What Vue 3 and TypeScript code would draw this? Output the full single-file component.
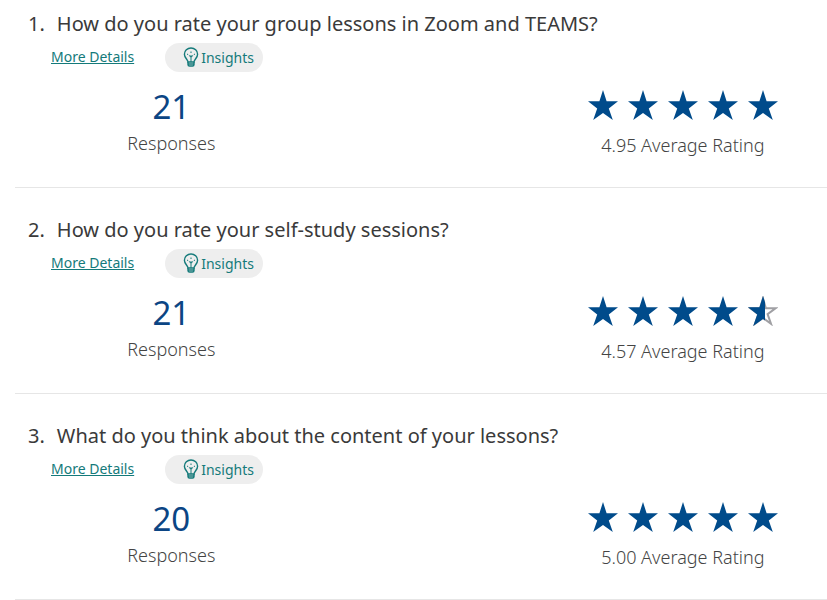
<script setup lang="ts">
interface Question {
  id: number
  title: string
  responses: number
  rating: number
}

const questions: Question[] = [
  { id: 1, title: 'How do you rate your group lessons in Zoom and TEAMS?', responses: 21, rating: 4.95 },
  { id: 2, title: 'How do you rate your self-study sessions?', responses: 21, rating: 4.57 },
  { id: 3, title: 'What do you think about the content of your lessons?', responses: 20, rating: 5 },
]

// Ratings are shown to the nearest half star.
function starKind(rating: number, position: number): 'full' | 'half' | 'empty' {
  const rounded = Math.round(rating * 2) / 2
  if (rounded >= position) return 'full'
  return rounded >= position - 0.5 ? 'half' : 'empty'
}
</script>

<template>
  <main class="results">
    <section v-for="q in questions" :key="q.id" class="question">
      <h2 class="title">
        <span class="number">{{ q.id }}.</span>
        <span>{{ q.title }}</span>
      </h2>
      <div class="actions">
        <a class="details" href="#">More Details</a>
        <button class="insights" type="button">
          <svg class="bulb" viewBox="0 0 16 20" aria-hidden="true">
            <path d="M5 15C5 12.500 1.400 11 1.400 7.200a6.600 6.200 0 0 1 13.200 0c0 3.800-3.600 5.300-3.600 7.800z" />
            <path d="M5 15v2.500c0 1 .5 1.500 1.500 1.500h3c1 0 1.500-.5 1.500-1.500V15M5 17h6" />
            <path class="filament" d="M8 15V8M8 10L6 8.500M8 10l2-1.500M8 4.500v1.500M4 7l1.200.7M12 7l-1.200.7" />
          </svg>
          <span>Insights</span>
        </button>
      </div>
      <div class="stats">
        <div class="stat">
          <span class="count">{{ q.responses }}</span>
          <span class="caption">Responses</span>
        </div>
        <div class="stat score">
          <div class="stars" role="img" :aria-label="`${q.rating.toFixed(2)} out of 5`">
            <svg v-for="n in 5" :key="n" class="star" viewBox="0 0 30 30">
              <polygon v-if="starKind(q.rating, n) === 'full'" class="fill" points="15,0 18.6,11.3 30,11.3 20.8,18.5 24.8,30 15,23 5.2,30 9.2,18.5 0,11.3 11.4,11.3" />
              <template v-else>
                <polygon class="outline" points="15,2.5 17.9,12.3 27.5,12.3 19.6,18.2 23,27.8 15,22 7,27.8 10.4,18.2 2.5,12.3 12.1,12.3" />
                <polygon v-if="starKind(q.rating, n) === 'half'" class="fill" points="15,0 17,6.3 17,24.5 15,23 5.2,30 9.2,18.5 0,11.3 11.4,11.3" />
              </template>
            </svg>
          </div>
          <span class="caption">{{ q.rating.toFixed(2) }} Average Rating</span>
        </div>
      </div>
    </section>
  </main>
</template>

<style>
body {
  margin: 0;
  background: #fff;
}
</style>

<style scoped>
.results {
  padding-left: 15px;
  font-family: "Segoe UI", "Noto Sans", "Open Sans", sans-serif;
}

.question {
  padding: 28px 0 29px;
  border-bottom: 1px solid #e6e6e6;
}

.question:first-child {
  padding-top: 10px;
}

.title {
  display: flex;
  gap: 12px;
  margin: 0;
  padding-left: 13px;
  color: #3a3a3a;
  font-size: 20px;
  font-weight: 400;
  line-height: 28px;
}

.actions {
  display: flex;
  align-items: flex-start;
  gap: 31px;
  margin-top: 5px;
  padding-left: 36px;
}

.details {
  color: #147a7a;
  font-size: 14px;
  line-height: 28px;
}

.insights {
  display: flex;
  align-items: center;
  gap: 2px;
  height: 29px;
  padding: 0 9px 0 18px;
  border: 0;
  border-radius: 15px;
  background: #eee;
  color: #147a7a;
  font-family: inherit;
  font-size: 14px;
  cursor: pointer;
}

.bulb {
  width: 16px;
  height: 20px;
  margin-bottom: 2px;
  fill: none;
  stroke: currentColor;
  stroke-width: 1.4;
}

.filament {
  stroke-width: 1;
}

.stats {
  display: grid;
  grid-template-columns: 385fr 260fr 355fr;
  margin-top: 15px;
}

.stat {
  display: flex;
  flex-direction: column;
  align-items: center;
  gap: 3px;
}

.score {
  grid-column: 3;
}

.count {
  color: #0b4584;
  font-size: 33px;
  line-height: 40px;
}

.caption {
  color: #444;
  font-size: 18px;
  font-weight: 300;
  line-height: 26px;
}

.stars {
  display: flex;
  gap: 10px;
  padding: 3px 0 9px;
}

.star {
  width: 30px;
  height: 30px;
}

.fill {
  fill: #004b8b;
}

.outline {
  fill: #fff;
  stroke: #a0a0a4;
  stroke-width: 2;
}
</style>
